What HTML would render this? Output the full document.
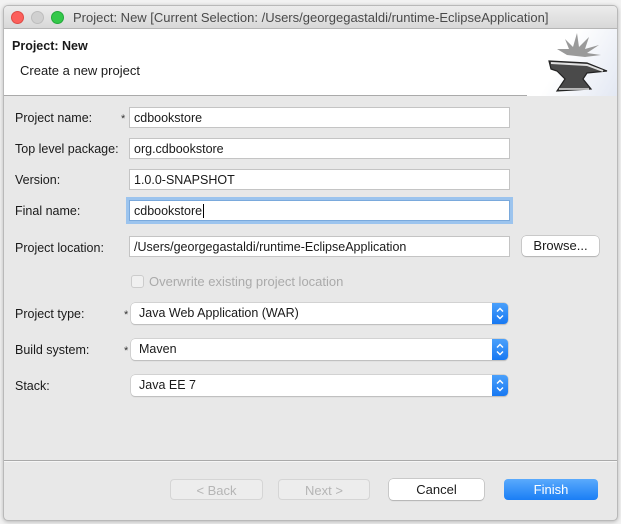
<!DOCTYPE html>
<html><head><style>
*{box-sizing:border-box;margin:0;padding:0}
body{width:621px;height:524px;background:#f2f2f2;position:relative;overflow:hidden;font-family:"Liberation Sans",sans-serif;font-size:12.5px;color:#1a1a1a}
.win{position:absolute;left:3px;top:5px;width:615px;height:516px;background:#e8e8e8;border:1px solid #b9b9b9;border-radius:5px;overflow:hidden;box-shadow:0 1px 4px rgba(0,0,0,.25)}
.title{height:23px;background:linear-gradient(#ececec,#d8d8d8);border-bottom:1px solid #b5b5b5;position:relative}
.title span{position:absolute;left:69px;top:4px;font-size:13px;color:#4a4a4a}
.dot{position:absolute;top:5px;width:13px;height:13px;border-radius:50%}
.hdr{position:absolute;left:0;top:23px;width:613px;height:67px;background:#fff;border-bottom:1px solid #aaa}
.abs{position:absolute}
.lbl{position:absolute;left:11px}
.tf{position:absolute;left:125px;width:381px;height:21px;background:#fff;border:1px solid #c4c4c4;padding:3px 0 0 4px}
.star{position:absolute;left:118px;color:#333;font-size:11px}
.cb{position:absolute;left:127px;width:377px;height:21px;background:#fff;border-radius:4px;box-shadow:0 0 0 .5px #bbb,0 1px 1px rgba(0,0,0,.2);padding:3px 0 0 8px}
.cb .ar{position:absolute;right:0;top:0;width:16px;height:21px;background:linear-gradient(#4aa0fb,#1778f2);border-radius:0 4px 4px 0}
.btn{position:absolute;top:473px;height:21px;border-radius:4px;text-align:center;padding-top:3px;font-size:13px}
</style></head><body>
<div class="win">
 <div class="title">
  <div class="dot" style="left:7px;background:#fc605c;border:1px solid #de4a45"></div>
  <div class="dot" style="left:27px;background:#d0d0d0;border:1px solid #bdbdbd"></div>
  <div class="dot" style="left:47px;background:#34c84a;border:1px solid #22a93a"></div>
  <span>Project: New [Current Selection: /Users/georgegastaldi/runtime-EclipseApplication]</span>
 </div>
 <div class="hdr">
  <div class="abs" style="left:8px;top:10px;font-weight:bold;font-size:12.5px">Project: New</div>
  <div class="abs" style="left:16px;top:34px;font-size:13px">Create a new project</div>
  <div class="abs" style="right:0;top:0;width:90px;height:67px;background:linear-gradient(120deg,#fff 40%,#e3e8f3)"></div>
  <svg class="abs" style="right:4px;top:2px" width="72" height="64" viewBox="0 0 72 64">
   <path d="M26 24 L16 18 L28 18 L24 8 L32 16 L36 2 L38 16 L48 6 L44 18 L58 14 L46 22 L60 24 L44 26Z" fill="#9a9a9a"/>
   <path d="M8 30 L46 32 L66 40 L46 42 L42 48 L50 58 L16 60 L24 48 L16 40 L10 38Z" fill="#4a4a4a" stroke="#222" stroke-width="1.2"/>
   <path d="M10 32 L46 34 L62 40" stroke="#e0e0e0" stroke-width="2" fill="none"/>
   <path d="M18 58 L48 58" stroke="#ddd" stroke-width="1.5"/>
  </svg>
 </div>
 <div class="lbl" style="top:105px">Project name:</div><div class="star" style="top:107px;left:117px">*</div>
 <div class="tf" style="top:101px">cdbookstore</div>
 <div class="lbl" style="top:136px">Top level package:</div>
 <div class="tf" style="top:132px">org.cdbookstore</div>
 <div class="lbl" style="top:167px">Version:</div>
 <div class="tf" style="top:163px">1.0.0-SNAPSHOT</div>
 <div class="lbl" style="top:198px">Final name:</div>
 <div class="tf" style="top:194px;box-shadow:0 0 0 3px #9cc4ee;border-color:#7aa9dc">cdbookstore<span style="border-left:1px solid #000;margin-left:1px"></span></div>
 <div class="lbl" style="top:235px">Project location:</div>
 <div class="tf" style="top:230px">/Users/georgegastaldi/runtime-EclipseApplication</div>
 <div class="abs" style="left:518px;top:230px;width:77px;height:20px;background:#fff;border-radius:4px;box-shadow:0 0 0 .5px #aaa,0 1px 1px rgba(0,0,0,.2);text-align:center;padding-top:2px;font-size:13px">Browse...</div>
 <div class="abs" style="left:127px;top:269px;width:13px;height:13px;border:1px solid #ccc;border-radius:3px;background:#f0f0f0"></div>
 <div class="abs" style="left:145px;top:268px;color:#aaa;font-size:13px">Overwrite existing project location</div>
 <div class="lbl" style="top:301px">Project type:</div><div class="star" style="top:303px;left:120px">*</div>
 <div class="cb" style="top:297px">Java Web Application (WAR)<div class="ar"><svg width="16" height="21"><path d="M5 8.5l3-3 3 3M5 12.5l3 3 3-3" stroke="#fff" stroke-width="1.4" fill="none"/></svg></div></div>
 <div class="lbl" style="top:337px">Build system:</div><div class="star" style="top:339px;left:120px">*</div>
 <div class="cb" style="top:333px">Maven<div class="ar"><svg width="16" height="21"><path d="M5 8.5l3-3 3 3M5 12.5l3 3 3-3" stroke="#fff" stroke-width="1.4" fill="none"/></svg></div></div>
 <div class="lbl" style="top:373px">Stack:</div>
 <div class="cb" style="top:369px">Java EE 7<div class="ar"><svg width="16" height="21"><path d="M5 8.5l3-3 3 3M5 12.5l3 3 3-3" stroke="#fff" stroke-width="1.4" fill="none"/></svg></div></div>
 <div class="abs" style="left:0;top:454px;width:613px;height:1px;background:#aaa"></div>
 <div class="abs" style="left:0;top:455px;width:613px;height:1px;background:#f6f6f6"></div>
 <div class="btn" style="left:166px;width:93px;background:#ededed;border:1px solid #d5d5d5;color:#b5b5b5">&lt; Back</div>
 <div class="btn" style="left:274px;width:92px;background:#ededed;border:1px solid #d5d5d5;color:#b5b5b5">Next &gt;</div>
 <div class="btn" style="left:385px;width:95px;background:#fff;box-shadow:0 0 0 .5px #aaa,0 1px 1px rgba(0,0,0,.2)">Cancel</div>
 <div class="btn" style="left:500px;width:94px;background:linear-gradient(#5aaafc,#1a7ef5);color:#fff">Finish</div>
</div>
</body></html>
